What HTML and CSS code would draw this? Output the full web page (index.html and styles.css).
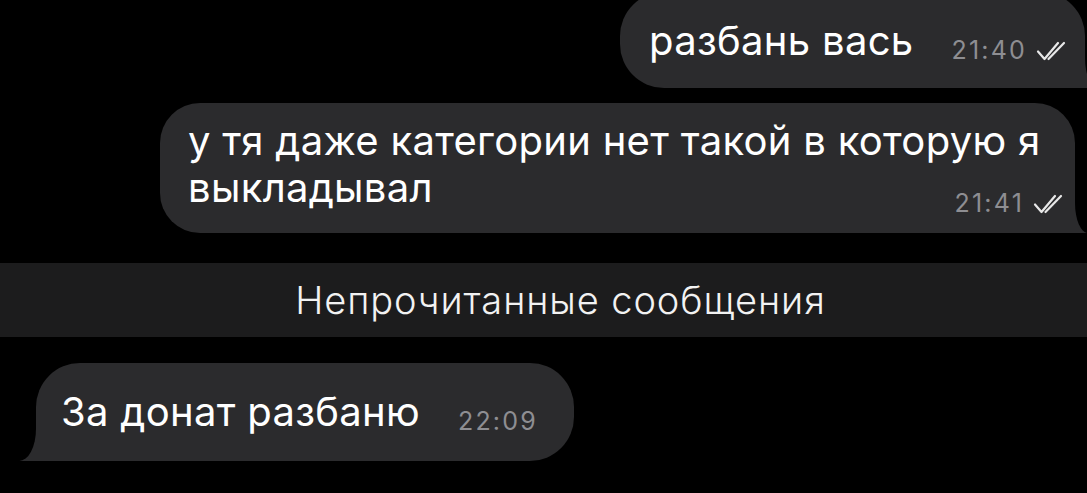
FILE: index.html
```html
<html lang="ru">
  <head>
    <meta charset="utf-8">
    <meta name="viewport" content="width=device-width, initial-scale=1">
    <title>Чат</title>
    <link rel="stylesheet" href="styles.css">
  </head>

  <body>
    <div class="chat">
      <div class="row out first">
        <div class="bubble out edge">
          разбань вась<span class="meta"><span class="time">21:40</span><svg class="checks" width="32" height="22" viewBox="0 0 32 22"><path d="M2 11.5 L8.5 19 L22 3"/><path d="M12.5 19 L28 3"/></svg></span>
        </div>
      </div>

      <div class="row out">
        <div class="bubble out wide">
          у тя даже категории нет такой в которую я выкладывал<span class="meta low"><span class="time">21:41</span><svg class="checks" width="32" height="22" viewBox="0 0 32 22"><path d="M2 11.5 L8.5 19 L22 3"/><path d="M12.5 19 L28 3"/></svg></span>
        </div>
      </div>

      <div class="unread">Непрочитанные сообщения</div>

      <div class="row in">
        <div class="bubble in">
          За донат разбаню<span class="meta"><span class="time">22:09</span></span>
        </div>
      </div>
    </div>
  </body>
</html>
```

FILE: styles.css
```css
body {
  margin: 0;
  background-color: #000;
  font-family: Inter, "Noto Sans", sans-serif;
  color: #fff;
  overflow: hidden;
}

* {
  box-sizing: border-box;
}

.chat {
  display: flex;
  flex-direction: column;
}

.row {
  display: flex;
}

.row.out {
  justify-content: flex-end;
  padding-right: 12px;
}

.row.in {
  justify-content: flex-start;
  padding-left: 36px;
  margin-top: 26px;
}

.row.first {
  margin-top: -8px;
  margin-bottom: 15px;
}

.bubble {
  position: relative;
  background-color: #2b2b2d;
  border-radius: 44px;
  font-size: 40px;
  line-height: 47px;
  letter-spacing: 0.3px;
  padding: 25px 20px 24px 29px;
}

.bubble.edge {
  margin-right: -10px;
  padding-right: 17px;
}

.bubble.wide {
  max-width: 915px;
  border-radius: 40px;
  padding: 14px 10px 22px 28px;
}

.bubble.in {
  padding: 25px 36px 26px 25px;
}

/* tails */
.bubble.out {
  border-bottom-right-radius: 18px;
}

.bubble.out::before {
  content: "";
  position: absolute;
  bottom: 0;
  right: -13px;
  width: 40px;
  height: 36px;
  background-color: #2b2b2d;
  border-bottom-right-radius: 3px 2px;
}

.bubble.out::after {
  content: "";
  position: absolute;
  bottom: 0;
  right: -40px;
  width: 40px;
  height: 38px;
  background-color: #000;
  border-bottom-left-radius: 13px 30px;
}

.bubble.in {
  border-bottom-left-radius: 18px;
}

.bubble.in::before {
  content: "";
  position: absolute;
  bottom: 0;
  left: -17px;
  width: 44px;
  height: 38px;
  background-color: #2b2b2d;
  border-bottom-left-radius: 3px 2px;
}

.bubble.in::after {
  content: "";
  position: absolute;
  bottom: 0;
  left: -44px;
  width: 44px;
  height: 40px;
  background-color: #000;
  border-bottom-right-radius: 17px 32px;
}

.meta {
  float: right;
  display: flex;
  align-items: center;
  gap: 9px;
  margin-left: 38px;
  position: relative;
  top: 10px;
  letter-spacing: 0;
}

.meta.low {
  top: 16px;
}

.time {
  font-size: 25px;
  color: #8e8e92;
  letter-spacing: 2.2px;
}

.checks {
  fill: none;
  stroke: #e8e8e8;
  stroke-width: 2.2;
  stroke-linecap: round;
  stroke-linejoin: round;
}

.unread {
  margin-top: 30px;
  height: 74px;
  padding-left: 34px;
  background-color: #1c1c1d;
  display: flex;
  align-items: center;
  justify-content: center;
  font-size: 38px;
  font-weight: 300;
  letter-spacing: 0.9px;
  color: #f2f2f2;
}
```
